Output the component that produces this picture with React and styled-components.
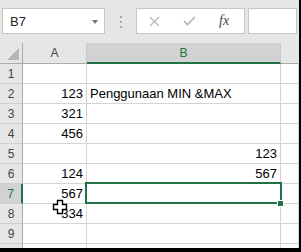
import React from "react";
import styled, { createGlobalStyle } from "styled-components";

const Global = createGlobalStyle`
  html, body { margin: 0; padding: 0; background: #000; }
  #root { width: 301px; height: 252px; }
`;

const Screen = styled.div`
  width: 301px;
  height: 252px;
  background: #000;
  overflow: hidden;
`;

const Window = styled.div`
  width: 299px;
  height: 248px;
  background: #fff;
  display: flex;
  flex-direction: column;
  overflow: hidden;
`;

const FormulaBar = styled.div`
  height: 43px;
  flex: none;
  box-sizing: border-box;
  background: #e6e6e6;
  display: flex;
  align-items: flex-start;
  padding: 8px 0 0 2px;
`;

const NameBox = styled.div`
  box-sizing: border-box;
  width: 103px;
  height: 26px;
  background: #fff;
  border: 1px solid #c6c6c6;
  display: flex;
  align-items: center;
  justify-content: space-between;
  padding: 0 6px 0 7px;
  font-family: "Liberation Sans", Arial, sans-serif;
  font-size: 13px;
  color: #222;
`;

const Caret = styled.span`
  width: 0;
  height: 0;
  border-left: 3.5px solid transparent;
  border-right: 3.5px solid transparent;
  border-top: 4px solid #777;
  margin-top: 1px;
`;

const Splitter = styled.div`
  display: flex;
  flex-direction: column;
  gap: 3px;
  margin: 8px 0 0 15px;
`;

const Dot = styled.span`
  width: 2px;
  height: 2px;
  background: #a6a6a6;
`;

const FxBox = styled.div`
  box-sizing: border-box;
  width: 109px;
  height: 26px;
  margin-left: 14px;
  background: #fff;
  border: 1px solid #c6c6c6;
  display: flex;
  align-items: center;
  padding-left: 12px;
`;

const IconSlot = styled.span`
  display: flex;
  align-items: center;
  margin-left: ${(p) => p.$gap || 0}px;
`;

const Fx = styled.span`
  font-family: "Liberation Serif", "Times New Roman", serif;
  font-style: italic;
  font-size: 14px;
  color: #444;
  margin-left: 23px;
  margin-top: -1px;
`;

const FormulaInput = styled.div`
  box-sizing: border-box;
  width: 49px;
  height: 26px;
  margin-left: 3px;
  background: #fff;
  border: 1px solid #c6c6c6;
`;

const Sheet = styled.div`
  position: relative;
  flex: 1;
  display: grid;
  grid-template-columns: 23px 64px 194px 1fr;
  grid-template-rows: 21px;
  grid-auto-rows: 20px;
  font-family: "Liberation Sans", Arial, sans-serif;
`;

const Corner = styled.div`
  box-sizing: border-box;
  background: #e6e6e6;
  border-right: 1px solid #ababab;
  border-bottom: 1px solid #ababab;
  position: relative;
  &::after {
    content: "";
    position: absolute;
    right: 3px;
    bottom: 3px;
    width: 0;
    height: 0;
    border-left: 12px solid transparent;
    border-bottom: 12px solid #b7b7b7;
  }
`;

const ColHead = styled.div`
  box-sizing: border-box;
  background: ${(p) => (p.$sel ? "#d2d2d2" : "#e6e6e6")};
  color: ${(p) => (p.$sel ? "#217346" : "#444")};
  border-right: 1px solid ${(p) => (p.$last ? "transparent" : "#c9c9c9")};
  border-bottom: ${(p) => (p.$sel ? "2px solid #217346" : "1px solid #ababab")};
  display: flex;
  align-items: center;
  justify-content: center;
  font-size: 12px;
  padding-top: ${(p) => (p.$sel ? 1 : 0)}px;
`;

const RowHead = styled.div`
  box-sizing: border-box;
  background: ${(p) => (p.$sel ? "#d2d2d2" : "#e6e6e6")};
  color: ${(p) => (p.$sel ? "#217346" : "#444")};
  border-right: ${(p) => (p.$sel ? "2px solid #217346" : "1px solid #ababab")};
  border-bottom: 1px solid #d0d0d0;
  display: flex;
  align-items: center;
  justify-content: center;
  font-size: 12px;
  padding-top: 1px;
`;

const Cell = styled.div`
  box-sizing: border-box;
  border-right: 1px solid #d4d4d4;
  border-bottom: 1px solid #d4d4d4;
  display: flex;
  align-items: flex-end;
  justify-content: ${(p) => (p.$num ? "flex-end" : "flex-start")};
  padding: 0 3px 2px 3px;
  font-size: 13px;
  line-height: 15px;
  color: #000;
  white-space: nowrap;
  overflow: visible;
`;

const Selection = styled.div`
  position: absolute;
  left: 85px;
  top: 139px;
  width: 197px;
  height: 22px;
  box-sizing: border-box;
  border: 2px solid #217346;
  pointer-events: none;
`;

const Handle = styled.div`
  position: absolute;
  left: 277px;
  top: 157px;
  width: 7px;
  height: 7px;
  box-sizing: border-box;
  background: #217346;
  border: 1px solid #fff;
`;

const Cursor = styled.svg`
  position: absolute;
  left: 52px;
  top: 156px;
`;

const cols = ["A", "B"];
const data = [
  ["", ""],
  ["123", "Penggunaan MIN &MAX"],
  ["321", ""],
  ["456", ""],
  ["", "123"],
  ["124", "567"],
  ["567", ""],
  ["334", ""],
  ["", ""],
  ["", ""],
];

export default function App() {
  return (
    <>
      <Global />
      <Screen>
        <Window>
          <FormulaBar>
            <NameBox>
              <span>B7</span>
              <Caret />
            </NameBox>
            <Splitter>
              <Dot />
              <Dot />
              <Dot />
            </Splitter>
            <FxBox>
              <IconSlot>
                <svg width="11" height="11" viewBox="0 0 11 11">
                  <path d="M1 1 L10 10 M10 1 L1 10" stroke="#b9b9b9" strokeWidth="1.3" fill="none" />
                </svg>
              </IconSlot>
              <IconSlot $gap={23}>
                <svg width="13" height="10" viewBox="0 0 13 10">
                  <path d="M1 5 L4.5 8.5 L12 1" stroke="#b3b3b3" strokeWidth="1.6" fill="none" />
                </svg>
              </IconSlot>
              <Fx>fx</Fx>
            </FxBox>
            <FormulaInput />
          </FormulaBar>
          <Sheet>
            <Corner />
            {cols.map((c) => (
              <ColHead key={c} $sel={c === "B"}>
                {c}
              </ColHead>
            ))}
            <ColHead $last />
            {data.map((row, i) => (
              <React.Fragment key={i}>
                <RowHead $sel={i === 6}>{i < 9 ? i + 1 : ""}</RowHead>
                <Cell $num>{row[0]}</Cell>
                <Cell $num={/^\d+$/.test(row[1])}>{row[1]}</Cell>
                <Cell />
              </React.Fragment>
            ))}
            <Selection />
            <Handle />
            <Cursor width="16" height="16" viewBox="0 0 16 16">
              <path
                d="M5.5 1.5 H10.5 V5.5 H14.5 V10.5 H10.5 V14.5 H5.5 V10.5 H1.5 V5.5 H5.5 Z"
                fill="#fff"
                stroke="#000"
                strokeWidth="1.4"
              />
            </Cursor>
          </Sheet>
        </Window>
      </Screen>
    </>
  );
}
